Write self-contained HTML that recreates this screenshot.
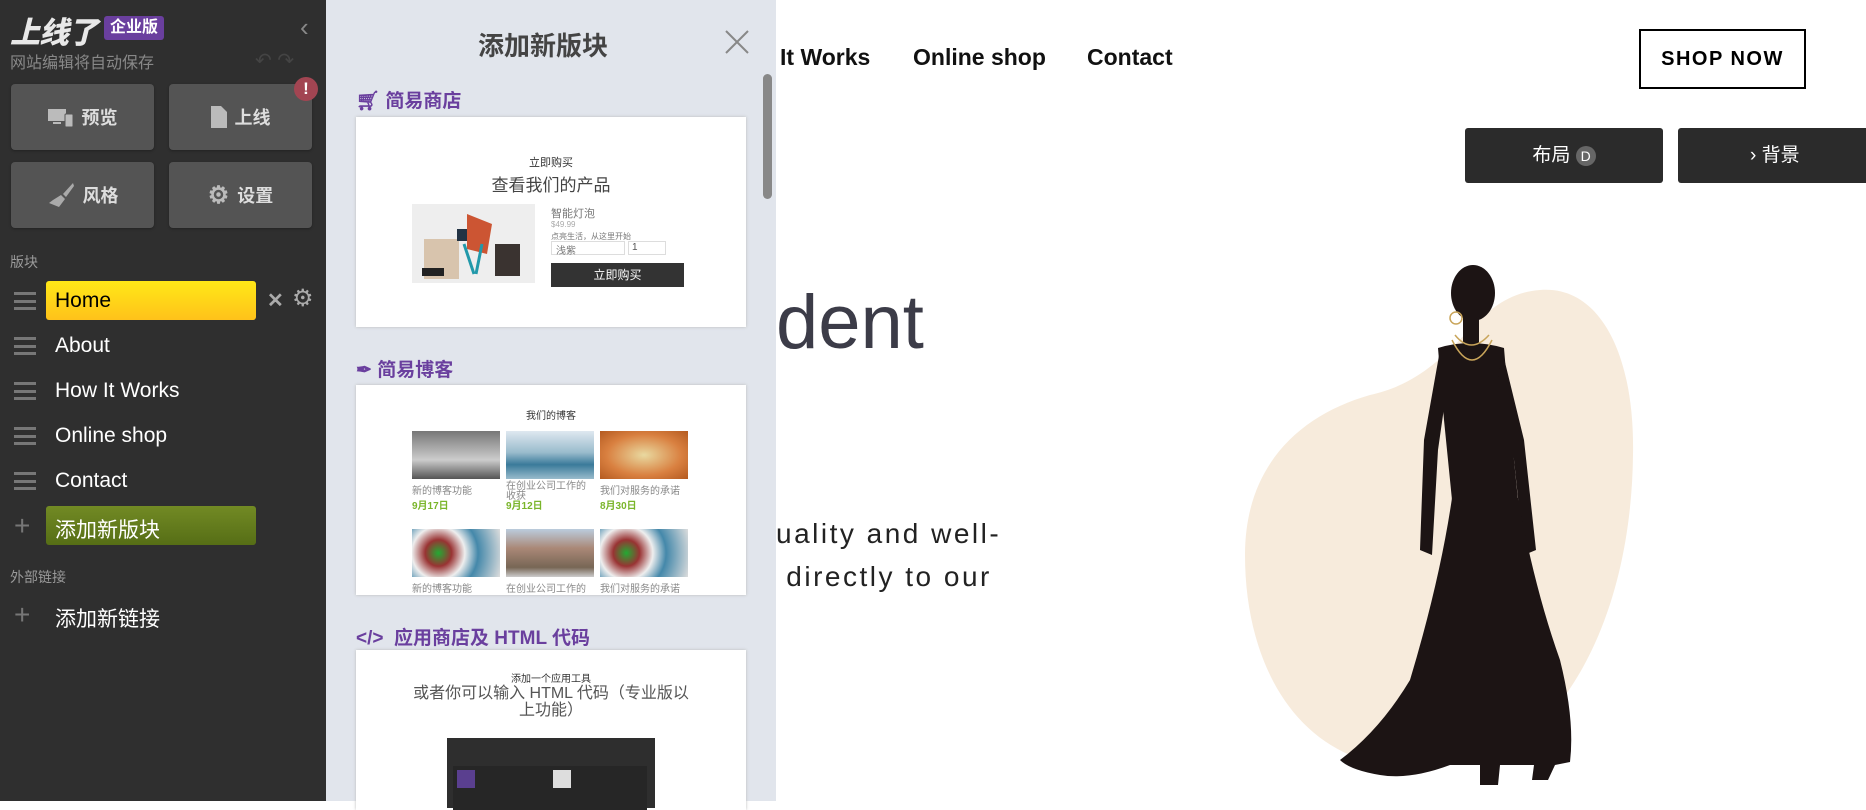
<!DOCTYPE html>
<html><head><meta charset="utf-8">
<style>
*{margin:0;padding:0;box-sizing:border-box}
body{width:1866px;height:801px;overflow:hidden;background:#fff;position:relative;font-family:"Liberation Sans","Noto Sans CJK SC",sans-serif}
.abs{position:absolute}
#side{left:0;top:0;width:326px;height:801px;background:#2f2f2f}
.btn{position:absolute;width:143px;height:66px;background:#545454;border-radius:4px;color:#ddd;font-weight:bold;font-size:18px;display:flex;align-items:center;justify-content:center;gap:8px;box-shadow:0 1px 2px #222}
.row{position:absolute;left:0;width:326px;height:40px;color:#fff;font-size:21px}
.ham{position:absolute;left:14px;top:11px;width:22px;height:18px;border-top:3px solid #777;border-bottom:3px solid #777}
.ham:after{content:"";position:absolute;left:0;right:0;top:4.5px;height:3px;background:#777}
.row span{position:absolute;left:55px;top:8px}
.plus{position:absolute;left:14px;top:8px;color:#777;font-size:28px;line-height:24px}
#panel{left:326px;top:0;width:450px;height:801px;background:#e1e5ec}
.sec{position:absolute;left:30px;color:#6a3f9e;font-weight:bold;font-size:19px}
.card{position:absolute;left:30px;width:390px;background:#fff;box-shadow:0 0 3px #bbb;overflow:hidden}
.c{text-align:center;color:#333}
.nav{position:absolute;top:44px;font-size:23px;font-weight:bold;color:#111}
</style></head><body>
<div id="side" class="abs">
 <div class="abs" style="left:10px;top:8px;color:#e8e8e8;font-size:30px;font-weight:900;font-style:italic;letter-spacing:-1px">上线了</div>
 <div class="abs" style="left:104px;top:16px;width:60px;height:24px;background:#6a3f9e;border-radius:3px;color:#fff;font-weight:bold;font-size:16px;text-align:center;line-height:24px">企业版</div>
 <div class="abs" style="left:300px;top:14px;color:#888;font-size:26px;line-height:26px">&#x2039;</div>
 <div class="abs" style="left:10px;top:49px;color:#888;font-size:16px">网站编辑将自动保存</div>
 <div class="abs" style="left:255px;top:48px;color:#444;font-size:20px">&#x21B6; &#x21B7;</div>
 <div class="btn" style="left:11px;top:84px"><svg width="26" height="20"><rect x="0" y="2" width="18" height="12" fill="#bbb"/><rect x="5" y="15" width="8" height="2" fill="#bbb"/><rect x="17" y="7" width="8" height="13" rx="1" fill="#bbb" stroke="#545454"/></svg>预览</div>
 <div class="btn" style="left:169px;top:84px"><svg width="16" height="22"><path d="M0 0H10L16 6V22H0Z" fill="#bbb"/></svg>上线</div>
 <div class="abs" style="left:294px;top:77px;width:24px;height:24px;border-radius:50%;background:#a24552;color:#fff;font-weight:bold;text-align:center;line-height:24px;font-size:17px">!</div>
 <div class="btn" style="left:11px;top:162px"><svg width="28" height="26"><path d="M26 1L16 12l3 3L27 4Z M14 13l4 4-6 8-10-4 4-3Z" fill="#aaa"/></svg>风格</div>
 <div class="btn" style="left:169px;top:162px"><span style="font-size:24px;color:#bbb">&#x2699;</span>设置</div>
 <div class="abs" style="left:10px;top:252px;color:#999;font-size:14px">版块</div>
 <div class="row" style="top:281px"><div class="ham"></div><div class="abs" style="left:46px;top:0;width:210px;height:39px;border-radius:3px;background:linear-gradient(#ffe817,#ffc21a)"></div><span style="color:#000">Home</span><div class="abs" style="left:267px;top:7px;color:#aaa;font-size:20px;font-weight:bold">&#x2715;</div><div class="abs" style="left:292px;top:3px;color:#aaa;font-size:24px">&#x2699;</div></div>
 <div class="row" style="top:326px"><div class="ham"></div><span>About</span></div>
 <div class="row" style="top:371px"><div class="ham"></div><span>How It Works</span></div>
 <div class="row" style="top:416px"><div class="ham"></div><span>Online shop</span></div>
 <div class="row" style="top:461px"><div class="ham"></div><span>Contact</span></div>
 <div class="row" style="top:506px"><div class="plus">+</div><div class="abs" style="left:46px;top:0;width:210px;height:39px;border-radius:3px;background:linear-gradient(#728a24,#566e16)"></div><span>添加新版块</span></div>
 <div class="abs" style="left:10px;top:567px;color:#999;font-size:14px">外部链接</div>
 <div class="row" style="top:595px"><div class="plus">+</div><span>添加新链接</span></div>
</div>

<div id="panel" class="abs">
 <div class="abs" style="left:0;width:434px;top:26px;text-align:center;font-size:26px;font-weight:bold;color:#444">添加新版块</div>
 <svg class="abs" style="left:399px;top:30px" width="24" height="24"><path d="M1 1L23 23M23 1L1 23" stroke="#888" stroke-width="2"/></svg>
 <div class="abs" style="left:437px;top:74px;width:9px;height:125px;border-radius:5px;background:#888"></div>
 <div class="sec" style="top:86px">&#x1F6D2;&#xFE0E; 简易商店</div>
 <div class="card" style="top:117px;height:210px">
  <div class="c" style="position:absolute;top:37px;width:100%;font-size:11px">立即购买</div>
  <div class="c" style="position:absolute;top:54px;width:100%;font-size:17px;color:#444">查看我们的产品</div>
  <div class="abs" style="left:56px;top:87px;width:123px;height:79px;background:#eee"><svg width="123" height="79"><rect x="12" y="35" width="35" height="40" fill="#d8c4ad"/><path d="M45 25h30v12H45Z" fill="#234"/><path d="M55 10l25 10-5 30-20-5Z" fill="#c53"/><path d="M52 40l10 30M70 40l-6 30" stroke="#29a" stroke-width="3"/><rect x="83" y="40" width="25" height="32" fill="#3a3330"/><path d="M10 64h22v8H10Z" fill="#222"/></svg></div>
  <div class="abs" style="left:195px;top:88px;font-size:11px;color:#777">智能灯泡</div>
  <div class="abs" style="left:195px;top:103px;font-size:8px;color:#aaa">$49.99</div>
  <div class="abs" style="left:195px;top:114px;font-size:8px;color:#777">点亮生活，从这里开始</div>
  <div class="abs" style="left:195px;top:124px;width:74px;height:14px;border:1px solid #ddd;font-size:10px;color:#777;padding-left:4px">浅紫</div>
  <div class="abs" style="left:272px;top:124px;width:38px;height:14px;border:1px solid #ddd;font-size:10px;color:#555;padding-left:3px">1</div>
  <div class="abs" style="left:195px;top:146px;width:133px;height:24px;background:#333;color:#fff;font-size:12px;text-align:center;line-height:24px">立即购买</div>
 </div>
 <div class="sec" style="top:355px">&#x2712;&#xFE0E; 简易博客</div>
 <div class="card" style="top:385px;height:210px">
  <div class="c" style="position:absolute;top:22px;width:100%;font-size:10px">我们的博客</div>
  <div class="abs" style="left:56px;top:46px;width:88px;height:48px;background:linear-gradient(#777,#ccc 60%,#555)"></div>
  <div class="abs" style="left:150px;top:46px;width:88px;height:48px;background:linear-gradient(#dfe8f0,#9bc 45%,#3a7a9a 70%,#9bc)"></div>
  <div class="abs" style="left:244px;top:46px;width:88px;height:48px;background:radial-gradient(#e9d9a0,#d98040 60%,#b45a20)"></div>
  <div class="abs" style="left:56px;top:97px;font-size:10px;color:#888">新的博客功能<br><b style="color:#7ab52a">9月17日</b></div>
  <div class="abs" style="left:150px;top:97px;width:88px;font-size:10px;color:#888;line-height:10px">在创业公司工作的收获<br><b style="color:#7ab52a">9月12日</b></div>
  <div class="abs" style="left:244px;top:97px;font-size:10px;color:#888">我们对服务的承诺<br><b style="color:#7ab52a">8月30日</b></div>
  <div class="abs" style="left:56px;top:144px;width:88px;height:48px;background:radial-gradient(circle at 30% 50%,#2a3,#933 20%,#eee 40%,#48a 60%,#ddd)"></div>
  <div class="abs" style="left:150px;top:144px;width:88px;height:48px;background:linear-gradient(#bcd,#a87 40%,#765 80%,#ccc)"></div>
  <div class="abs" style="left:244px;top:144px;width:88px;height:48px;background:radial-gradient(circle at 30% 50%,#2a3,#933 20%,#eee 40%,#48a 60%,#ddd)"></div>
  <div class="abs" style="left:56px;top:195px;font-size:10px;color:#888">新的博客功能</div>
  <div class="abs" style="left:150px;top:195px;font-size:10px;color:#888">在创业公司工作的</div>
  <div class="abs" style="left:244px;top:195px;font-size:10px;color:#888">我们对服务的承诺</div>
 </div>
 <div class="sec" style="top:623px">&lt;/&gt;&nbsp; 应用商店及 HTML 代码</div>
 <div class="card" style="top:650px;height:160px">
  <div class="c" style="position:absolute;top:20px;width:100%;font-size:10px">添加一个应用工具</div>
  <div class="c" style="position:absolute;top:35px;left:50px;width:290px;font-size:16px;line-height:17px;color:#555">或者你可以输入 HTML 代码（专业版以上功能）</div>
  <div class="abs" style="left:91px;top:88px;width:208px;height:70px;background:#2e2e2e"><div class="abs" style="left:6px;top:28px;width:194px;height:45px;background:#262626"></div><div class="abs" style="left:10px;top:32px;width:18px;height:18px;background:#5a3f8f"></div><div class="abs" style="left:106px;top:32px;width:18px;height:18px;background:#ddd"></div></div>
 </div>
</div>

<div class="nav" style="left:780px">It Works</div>
<div class="nav" style="left:913px">Online shop</div>
<div class="nav" style="left:1087px">Contact</div>
<div class="abs" style="left:1639px;top:29px;width:167px;height:60px;border:2px solid #000;font-weight:bold;font-size:20px;letter-spacing:1.5px;text-align:center;line-height:56px">SHOP NOW</div>
<div class="abs" style="left:1465px;top:128px;width:198px;height:55px;background:#2b2b2b;border-radius:3px;color:#fff;font-size:19px;text-align:center;line-height:55px">布局 <span style="display:inline-block;width:20px;height:20px;border-radius:50%;background:#666;font-size:14px;line-height:20px">D</span></div>
<div class="abs" style="left:1678px;top:128px;width:200px;height:55px;background:#2b2b2b;border-radius:3px;color:#fff;font-size:19px;line-height:55px;padding-left:72px">› 背景</div>
<div class="abs" style="left:776px;top:278px;font-size:76px;color:#3c3c48;line-height:90px">dent</div>
<div class="abs" style="left:776px;top:512px;font-size:28px;letter-spacing:2.5px;color:#222;line-height:43px">uality and well-<br>&nbsp;directly to our</div>
<svg class="abs" style="left:1240px;top:285px" width="400" height="490"><path d="M300 5C360 0 395 70 393 170C392 260 370 360 310 430C260 480 180 495 110 470C40 440 5 360 5 270C5 180 60 130 130 110C220 90 230 10 300 5Z" fill="#f7ebdc"/></svg>
<svg class="abs" style="left:1320px;top:260px" width="290" height="530">
<g fill="#1c1414">
<ellipse cx="153" cy="33" rx="22" ry="28"/>
<path d="M143 55h16v30h-16Z"/>
<path d="M118 88Q150 78 184 88L190 160 198 240Q150 250 132 240L124 160Z"/>
<path d="M120 90L104 180 100 290 112 295 118 190 128 120Z"/>
<path d="M182 90L204 180 216 290 204 295 194 200 178 120Z"/>
<path d="M132 238L198 238Q215 330 240 400 255 460 250 502L235 505 228 520 212 520 214 505 180 505 178 525 160 525 160 505 130 505Q90 520 60 515 30 510 20 500Q60 470 90 420 120 320 132 238Z"/>
</g>
<g fill="none" stroke="#c9a55a" stroke-width="1.5">
<path d="M135 75q16 20 34 0"/><path d="M132 80q20 40 40 0"/>
<circle cx="136" cy="58" r="6"/>
</g>
</svg>
</body></html>
